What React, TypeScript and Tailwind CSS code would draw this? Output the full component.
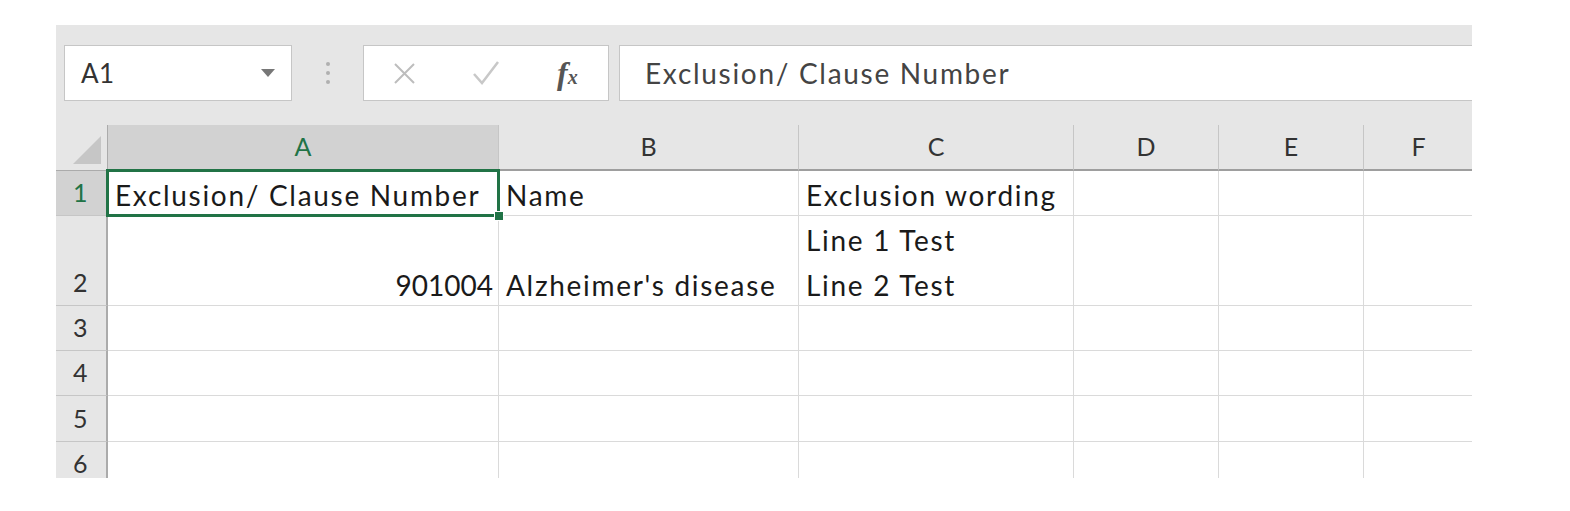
import React from 'react';

const cols = [
  { key: 'A', w: 391 },
  { key: 'B', w: 300 },
  { key: 'C', w: 275 },
  { key: 'D', w: 145 },
  { key: 'E', w: 145 },
  { key: 'F', w: 110 },
];

const rows: { n: number; h: number; cells: React.ReactNode[] }[] = [
  { n: 1, h: 45, cells: ['Exclusion/ Clause Number', 'Name', 'Exclusion wording', '', '', ''] },
  {
    n: 2,
    h: 90,
    cells: [
      <span className="block text-right pr-[5px] tracking-[0px]">901004</span>,
      "Alzheimer's disease",
      <>
        <span className="block">Line 1 Test</span>
        <span className="block">Line 2 Test</span>
      </>,
      '',
      '',
      '',
    ],
  },
  { n: 3, h: 45, cells: ['', '', '', '', '', ''] },
  { n: 4, h: 45, cells: ['', '', '', '', '', ''] },
  { n: 5, h: 46, cells: ['', '', '', '', '', ''] },
  { n: 6, h: 45, cells: ['', '', '', '', '', ''] },
];

const FONT = { fontFamily: 'Lato, "Open Sans", sans-serif' };

export default function App() {
  return (
    <div className="w-[1570px] h-[511px] bg-white pl-[56px] pt-[25px]" style={FONT}>
      <div className="w-[1416px] h-[453px] overflow-hidden bg-[#e6e6e6]">
        {/* Formula bar */}
        <div className="flex items-center h-[100px] pt-[20px] pb-[24px] pl-[8px]">
          <div className="flex items-center justify-between w-[228px] h-[56px] bg-white border border-[#c6c6c6] pl-[16px] pr-[16px]">
            <span className="text-[26px] text-[#333] tracking-[0.5px]">A1</span>
            <svg width="14" height="8" viewBox="0 0 14 8">
              <path d="M0 0 L14 0 L7 8 Z" fill="#777" />
            </svg>
          </div>
          <div className="flex flex-col items-center justify-center gap-[5px] w-[71px] h-[56px]">
            <span className="w-[4px] h-[4px] rounded-full bg-[#b0b0b0]" />
            <span className="w-[4px] h-[4px] rounded-full bg-[#b0b0b0]" />
            <span className="w-[4px] h-[4px] rounded-full bg-[#b0b0b0]" />
          </div>
          <div className="flex items-center w-[246px] h-[56px] bg-white border border-[#c6c6c6]">
            <div className="w-[82px] flex justify-center">
              <svg width="23" height="23" viewBox="0 0 23 23">
                <path d="M2 2 L21 21 M21 2 L2 21" stroke="#bdbdbd" strokeWidth="2" fill="none" />
              </svg>
            </div>
            <div className="w-[82px] flex justify-center">
              <svg width="28" height="26" viewBox="0 0 28 26">
                <path d="M2 14 L10 23 L26 2" stroke="#c8c8c8" strokeWidth="2.5" fill="none" />
              </svg>
            </div>
            <div className="w-[82px] flex justify-center">
              <span className="italic font-bold text-[#555] text-[32px] leading-none" style={{ fontFamily: '"Liberation Serif", serif' }}>
                f<span className="text-[20px]">x</span>
              </span>
            </div>
          </div>
          <div className="flex items-center flex-1 h-[56px] bg-white border border-[#c6c6c6] border-r-0 ml-[10px] pl-[25px]">
            <span className="text-[28px] text-[#444] tracking-[1.7px]">Exclusion/ Clause Number</span>
          </div>
        </div>

        {/* Grid */}
        <div className="bg-white">
          {/* Column headers */}
          <div className="flex h-[46px]">
            <div className="w-[52px] shrink-0 bg-[#e6e6e6] border-r border-b border-[#ababab] flex items-end justify-end pr-[6px] pb-[6px]">
              <svg width="28" height="28" viewBox="0 0 28 28">
                <path d="M28 0 L28 28 L0 28 Z" fill="#c6c6c6" />
              </svg>
            </div>
            {cols.map((c) => (
              <div
                key={c.key}
                style={{ width: c.w }}
                className={
                  c.key === 'A'
                    ? 'shrink-0 flex items-center justify-center bg-[#d2d2d2] text-[#217346] text-[25px] border-r border-b-2 border-[#217346] border-r-[#c6c6c6]'
                    : 'shrink-0 flex items-center justify-center bg-[#e6e6e6] text-[#333] text-[25px] border-r border-b-2 border-[#c6c6c6] border-b-[#9e9e9e]'
                }
              >
                {c.key}
              </div>
            ))}
          </div>
          {/* Rows */}
          {rows.map((r) => (
            <div key={r.n} className="flex" style={{ height: r.h }}>
              <div
                className={
                  r.n === 1
                    ? 'w-[52px] shrink-0 flex items-end justify-start pl-[17px] pb-[4px] bg-[#d2d2d2] text-[#217346] text-[25px] border-r-2 border-r-[#217346] border-b border-b-[#c6c6c6]'
                    : 'w-[52px] shrink-0 flex items-end justify-start pl-[17px] pb-[4px] bg-[#e6e6e6] text-[#333] text-[25px] border-r-2 border-r-[#ababab] border-b border-b-[#c6c6c6]'
                }
              >
                {r.n}
              </div>
              {cols.map((c, i) => (
                <div
                  key={c.key}
                  style={{ width: c.w }}
                  className="shrink-0 relative flex flex-col justify-end pl-[7px] border-r border-b border-[#dadada] text-[28px] tracking-[1.7px] leading-[45px] text-[#1a1a1a] whitespace-nowrap"
                >
                  <div className="translate-y-[3px]">{r.cells[i]}</div>
                  {r.n === 1 && i === 0 && (
                    <>
                      <div className="absolute z-10 -left-[2px] -top-[2px] -right-[2px] -bottom-[2px] border-[3px] border-[#217346] pointer-events-none" />
                      <div className="absolute z-20 -right-[6px] -bottom-[6px] w-[10px] h-[10px] bg-[#217346] border border-white" />
                    </>
                  )}
                </div>
              ))}
            </div>
          ))}
        </div>
      </div>
    </div>
  );
}
